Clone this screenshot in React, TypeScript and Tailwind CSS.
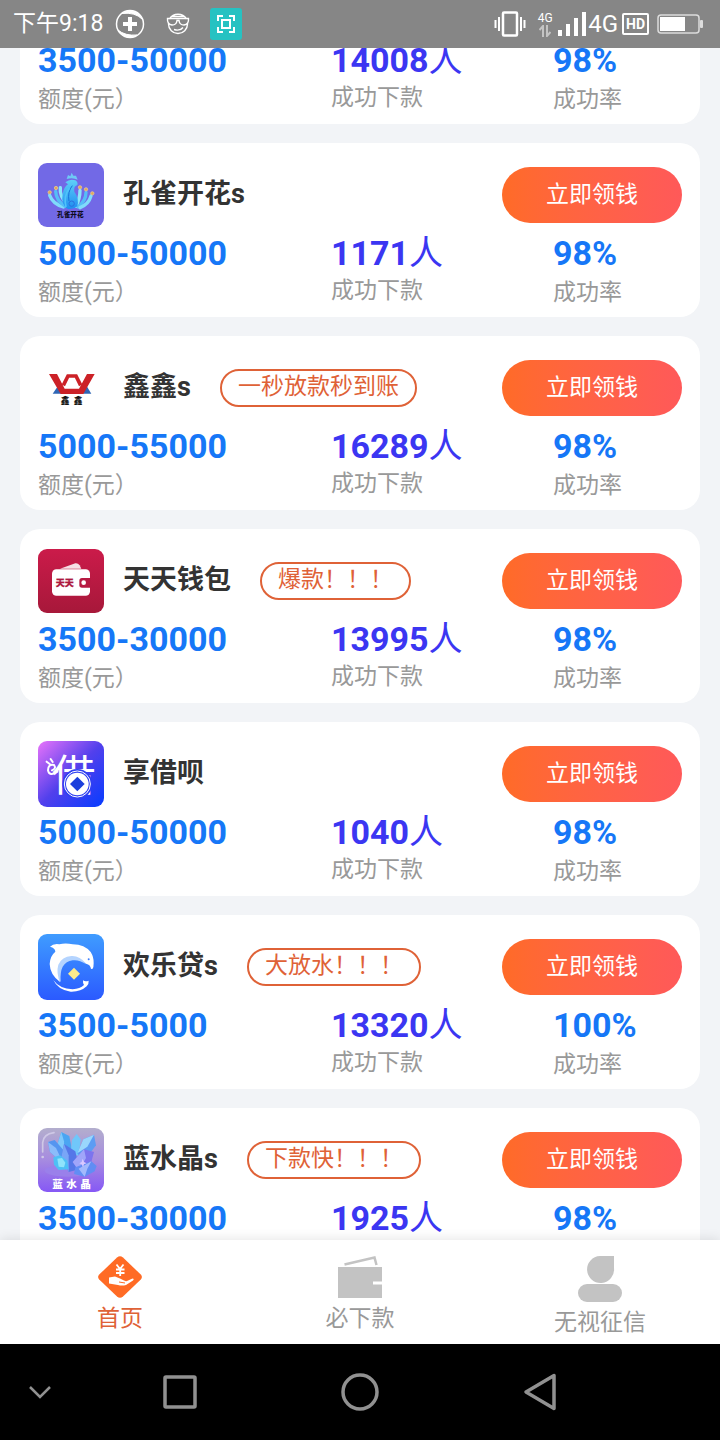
import React, { useState } from 'react';

const PeacockLogo = () => (
  <svg width="66" height="64" viewBox="0 0 198 192" aria-hidden="true">
    <defs>
      <linearGradient id="peacock" x1="0" y1="0" x2="0" y2="1">
        <stop offset="0" stopColor="#5fd0f8" />
        <stop offset="1" stopColor="#1f8df0" />
      </linearGradient>
    </defs>
    <rect width="198" height="192" rx="27" fill="#7269e6" />
    <g fill="none" strokeLinecap="round" strokeWidth="10">
      <path d="M35 97Q44 122 76 132" stroke="#7fdcfb" />
      <path d="M53 85Q54 112 82 130" stroke="#55bdf7" />
      <path d="M67 74Q64 100 88 124" stroke="#8be6fb" />
      <path d="M126 82Q126 108 114 130" stroke="#8be6fb" />
      <path d="M144 88Q144 114 120 132" stroke="#55bdf7" />
      <path d="M159 99Q152 124 126 134" stroke="#7fdcfb" />
    </g>
    <path d="M86 48L90 36L97 40L101 29L106 38L114 38L119 50Q104 42 86 48Z" fill="#6fc9f5" />
    <path d="M82 58Q96 46 112 52Q121 58 118 66Q106 70 109 86Q124 106 118 130Q108 140 90 138Q68 126 74 92Q78 72 90 64Z" fill="url(#peacock)" />
    <path d="M103 68Q88 86 93 114" fill="none" stroke="#1672d8" strokeWidth="3" />
    <path d="M84 132Q76 100 94 76" fill="none" stroke="#4fc3fa" strokeWidth="5" />
    <circle cx="101" cy="122" r="8" fill="none" stroke="#2c6fdf" strokeWidth="3" />
    <g fill="#e0a95c" stroke="#f3d08e" strokeWidth="2">
      <circle cx="35" cy="88" r="5" />
      <circle cx="54" cy="75" r="5" />
      <circle cx="126" cy="73" r="5" />
      <circle cx="144" cy="79" r="5" />
      <circle cx="163" cy="91" r="5" />
    </g>
    <text x="97" y="161" textAnchor="middle" fontSize="20" fontWeight="900" fill="#0d0b1f">孔雀开花</text>
  </svg>
);

const XinxinLogo = () => (
  <svg width="66" height="64" viewBox="0 0 198 192" aria-hidden="true">
    <path d="M44 113L60 90L74 113Z" fill="#2f66b5" />
    <path d="M132 113L146 90L160 113Z" fill="#2f66b5" />
    <path d="M33 54H57L80 98H123L147 54H170L136 114H68Z" fill="#cc2127" />
    <path d="M76 88L90 60H114L128 88" fill="none" stroke="#cc2127" strokeWidth="11" />
    <text x="68" y="145" fontSize="26" fontWeight="900" fill="#111">鑫</text>
    <text x="107" y="145" fontSize="26" fontWeight="900" fill="#111">鑫</text>
  </svg>
);

const WalletLogo = () => (
  <svg width="66" height="64" viewBox="0 0 198 192" aria-hidden="true">
    <defs>
      <linearGradient id="crimson" x1="0" y1="0" x2="0" y2="1">
        <stop offset="0" stopColor="#cb1b4a" />
        <stop offset="1" stopColor="#a7183a" />
      </linearGradient>
    </defs>
    <rect width="198" height="192" rx="27" fill="url(#crimson)" />
    <path d="M66 59L112 43Q120 42 125 49L130 59Z" fill="#f6dfe5" />
    <rect x="42" y="61" width="114" height="79" rx="13" fill="#fff" />
    <path d="M158 87H132Q124 87 124 95V108Q124 116 132 116H158Z" fill="#b71a42" />
    <circle cx="137" cy="101" r="7" fill="#fff" />
    <text x="80" y="112" textAnchor="middle" fontSize="27" fontWeight="900" fill="#ad183e" stroke="#ad183e">天天</text>
  </svg>
);

const JieLogo = () => (
  <svg width="66" height="66" viewBox="0 0 198 198" aria-hidden="true">
    <defs>
      <linearGradient id="violet" x1="0" y1="0" x2="1" y2="1">
        <stop offset="0" stopColor="#e873fa" />
        <stop offset="0.5" stopColor="#5240ec" />
        <stop offset="1" stopColor="#063cff" />
      </linearGradient>
    </defs>
    <rect width="198" height="198" rx="27" fill="url(#violet)" />
    <text x="42" y="150" fontSize="130" fill="#fff">借</text>
    <path d="M58 92Q34 108 30 88Q30 68 48 72Q56 82 42 88M38 54L44 63M26 62L35 69" fill="none" stroke="#fff" strokeWidth="6" strokeLinecap="round" />
    <circle cx="118" cy="129" r="45" fill="#2f40f2" />
    <circle cx="118" cy="129" r="39" fill="none" stroke="#fff" strokeWidth="3" />
    <circle cx="118" cy="129" r="34" fill="#fff" />
    <path d="M118 107L140 129L118 151L96 129Z" fill="#1b3fdc" />
  </svg>
);

const DolphinLogo = () => (
  <svg width="66" height="66" viewBox="0 0 198 198" aria-hidden="true">
    <defs>
      <linearGradient id="ocean" x1="0" y1="0" x2="0" y2="1">
        <stop offset="0" stopColor="#3f9cff" />
        <stop offset="1" stopColor="#2b5aff" />
      </linearGradient>
    </defs>
    <rect width="198" height="198" rx="27" fill="url(#ocean)" />
    <path d="M66 144Q50 116 58 92Q70 64 100 62Q126 62 144 90Q122 76 104 79Q84 82 74 98Q66 114 68 142Z" fill="#b4d4ff" />
    <path d="M36 38Q46 28 64 31Q82 26 104 31Q140 32 158 54Q168 70 167 88Q167 100 164 104L159 105Q158 92 144 89Q124 64 100 66Q72 68 61 92Q54 116 66 144Q36 122 35 90Q36 66 52 53Q52 42 36 38Z" fill="#fff" />
    <circle cx="152" cy="76" r="3" fill="#3f7fff" />
    <path d="M46 138Q64 164 104 166Q126 164 138 153Q134 146 135 139Q142 144 152 140Q153 150 146 157Q128 174 98 173Q60 168 46 138Z" fill="#fff" />
    <path d="M108 101L126 119L108 137L90 119Z" fill="#fdeb8c" />
  </svg>
);

const CrystalLogo = () => (
  <svg width="66" height="64" viewBox="0 0 198 192" aria-hidden="true">
    <defs>
      <linearGradient id="lilac" x1="0" y1="0" x2="0" y2="1">
        <stop offset="0" stopColor="#b3aecd" />
        <stop offset="0.5" stopColor="#a68be0" />
        <stop offset="1" stopColor="#8658f5" />
      </linearGradient>
    </defs>
    <rect width="198" height="192" rx="27" fill="url(#lilac)" />
    <path d="M14 72V44Q16 18 48 14" fill="none" stroke="#cfc8e6" strokeWidth="5" strokeLinecap="round" />
    <circle cx="14" cy="87" r="4" fill="#cfc8e6" />
    <ellipse cx="92" cy="128" rx="72" ry="18" fill="#9a80ea" />
    <path d="M70 12L94 24L102 66L80 92L58 50Z" fill="#4aa5f2" />
    <path d="M70 12L78 40L80 92L58 50Z" fill="#80c9fb" />
    <path d="M116 18L128 34L122 84L98 76L102 36Z" fill="#70c7fa" />
    <path d="M168 20L174 52L138 100L118 76L136 34Z" fill="#5d9cf3" />
    <path d="M168 20L148 56L118 76L136 34Z" fill="#9ad7fc" />
    <path d="M30 42L50 36L90 82L78 110L36 72Z" fill="#5595f0" />
    <path d="M30 42L54 60L78 110L36 72Z" fill="#8bbcfa" />
    <path d="M78 48L112 70L124 124L92 132L70 88Z" fill="#5577e8" />
    <path d="M78 48L92 82L92 132L70 88Z" fill="#79a6f7" />
    <path d="M138 64L168 72L160 102L122 128L104 102Z" fill="#7c74ee" />
    <path d="M138 64L144 90L122 128L104 102Z" fill="#a0a5fa" />
    <path d="M46 88L66 82L88 98L92 124L62 126L48 110Z" fill="#4ec0f5" />
    <path d="M58 92L72 90L82 104L78 118L62 116Z" fill="#8fe3fb" />
    <path d="M160 100L176 114L170 130L140 146L108 138L112 118Z" fill="#618df4" />
    <path d="M160 100L148 122L140 146L122 122Z" fill="#a3b9fc" />
    <path d="M134 92L138 102L146 106L138 109L135 118L131 109L124 106L131 102Z" fill="#d9c9ff" />
    <text x="43 85 127" y="180" fontSize="32" fontWeight="900" fill="#fff">蓝水晶</text>
  </svg>
);

const loans = [
  { name: '孔雀开花s', tag: '', logo: <PeacockLogo />, amount: '5000-50000', people: '1171', rate: '98%' },
  { name: '鑫鑫s', tag: '一秒放款秒到账', logo: <XinxinLogo />, amount: '5000-55000', people: '16289', rate: '98%' },
  { name: '天天钱包', tag: '爆款！！！', logo: <WalletLogo />, amount: '3500-30000', people: '13995', rate: '98%' },
  { name: '享借呗', tag: '', logo: <JieLogo />, amount: '5000-50000', people: '1040', rate: '98%' },
  { name: '欢乐贷s', tag: '大放水！！！', logo: <DolphinLogo />, amount: '3500-5000', people: '13320', rate: '100%' },
  { name: '蓝水晶s', tag: '下款快！！！', logo: <CrystalLogo />, amount: '3500-30000', people: '1925', rate: '98%' },
];

const tabs = [
  {
    label: '首页',
    icon: (
      <svg width="44" height="42" viewBox="0 0 44 42" aria-hidden="true">
        <path d="M19 1.4Q22-1 25 1.4L42.8 18.6Q45 21 42.8 23.4L25 40.6Q22 43 19 40.6L1.2 23.4Q-1 21 1.2 18.6Z" fill="#ff6b25" />
        <path d="M18.5 8.5L22 13L25.5 8.5M18 13.5H26.5M18 17H26.5M22.2 13V20" fill="none" stroke="#fff" strokeWidth="1.8" />
        <path d="M11 21.5L17 20.5L22 22.5L26 24.5Q28 25.5 29 25L34.5 22.5Q36.5 22.5 35 24.5L28 29Q24 30 20 29L11 27.5Z" fill="#fff" />
        <path d="M21 26L27 27" stroke="#ff6b25" strokeWidth="1" />
      </svg>
    ),
  },
  {
    label: '必下款',
    icon: (
      <svg width="44" height="42" viewBox="0 0 44 42" fill="#c3c3c3" aria-hidden="true">
        <path d="M6.5 8.5L36.5 1.5L38.5 9" fill="none" stroke="#c3c3c3" strokeWidth="2.5" />
        <path d="M0 11H44V25.5H35V28.5H44V42H0Z" />
      </svg>
    ),
  },
  {
    label: '无视征信',
    icon: (
      <svg width="44" height="46" viewBox="0 0 44 46" fill="#c3c3c3" aria-hidden="true">
        <path d="M22 0H36V12A13.5 13.5 0 1 1 22 0Z" />
        <rect y="28" width="44" height="18" rx="9" />
      </svg>
    ),
  },
];

const StatusBar = () => (
  <header className="relative flex h-12 shrink-0 items-center justify-between bg-[#868686] pl-[13px] pr-4 text-white">
    <div className="flex items-center">
      <span className="text-[23px] leading-8">下午9:18</span>
      <svg className="ml-3" width="30" height="30" viewBox="0 0 30 30" fill="none" stroke="#fff" aria-hidden="true">
        <circle cx="15" cy="15" r="13.5" strokeWidth="1.5" />
        <path d="M7 4.5A13 13 0 0 1 27 10Q20 3 7 4.5ZM3 21Q10 27 22 26A13 13 0 0 1 3 21Z" fill="#fff" />
        <path d="M15 8V22M8 15H22" strokeWidth="4" />
      </svg>
      <svg className="ml-[21px]" width="24" height="24" viewBox="0 0 24 24" fill="none" stroke="#fff" strokeWidth="1.4" aria-hidden="true">
        <path d="M3.5 7A10 10 0 0 1 20.5 7M2.5 12A9.500 9.500 0 0 0 21.5 12M6 4.5H18" />
        <path d="M1.5 6.5H22.5Q23 12.5 18 13Q13.5 13 13 8.5H11Q10.5 13 6 13Q1 12.5 1.5 6.5Z" />
        <path d="M8 17.5Q14 19.5 17 15.5" />
      </svg>
      <svg className="ml-5" width="32" height="32" viewBox="0 0 32 32" fill="none" stroke="#fff" strokeWidth="2" aria-hidden="true">
        <rect width="32" height="32" rx="3" fill="#26c2c2" stroke="none" />
        <path d="M8 13V8H13M19 8H24V13M24 19V24H19M13 24H8V19" />
        <rect x="12" y="12" width="8" height="8" />
      </svg>
    </div>
    <div className="flex items-center">
      <svg width="32" height="26" viewBox="0 0 32 26" fill="none" stroke="#fff" strokeWidth="2" aria-hidden="true">
        <rect x="9" y="1.5" width="14" height="23" rx="1" strokeWidth="2.5" />
        <path d="M1.5 9V17M5 6V20M27 6V20M30.5 9V17" />
      </svg>
      <div className="ml-[10px] flex w-[18px] flex-col items-center">
        <span className="text-xs leading-[14px]">4G</span>
        <svg width="12" height="12" viewBox="0 0 12 12" fill="none" stroke="#c4c4c4" strokeWidth="2" aria-hidden="true">
          <path d="M4 12V1L0.5 5M8 0V11L11.5 7" />
        </svg>
      </div>
      <svg className="ml-1" width="29" height="24" viewBox="0 0 29 24" fill="#fff" aria-hidden="true">
        <rect x="0" y="18" width="4" height="6" />
        <rect x="8" y="12" width="4" height="12" />
        <rect x="16" y="6" width="4" height="18" />
        <rect x="24" y="0" width="4" height="24" />
      </svg>
      <span className="ml-px text-2xl leading-8">4G</span>
      <span className="ml-1 flex h-[22px] w-[27px] items-center justify-center rounded-xs border-2 border-white text-sm font-bold leading-4">HD</span>
      <svg className="ml-2" width="47" height="20" viewBox="0 0 47 20" aria-hidden="true">
        <rect x="1" y="1" width="41" height="18" rx="3" fill="none" stroke="#dcdcdc" strokeWidth="1.5" />
        <rect x="3" y="3" width="25" height="14" fill="#fff" />
        <rect x="43" y="6" width="3" height="8" rx="1" fill="#dcdcdc" />
      </svg>
    </div>
  </header>
);

interface StatsProps {
  amount: string;
  people: string;
  rate: string;
}

const Stats = ({ amount, people, rate }: StatsProps) => (
  <div className="grid grid-cols-[293fr_222fr_129fr]">
    <div>
      <div className="text-[34px] font-bold leading-11 text-[#1677f7]">{amount}</div>
      <div className="text-[23px] leading-9 text-[#999]">额度(元）</div>
    </div>
    <div>
      <div className="text-[34px] font-bold leading-11 text-[#3b36f2]">
        {people}
        <span className="font-normal">人</span>
      </div>
      <div className="text-[23px] leading-8 text-[#999]">成功下款</div>
    </div>
    <div>
      <div className="text-[34px] font-bold leading-11 text-[#1677f7]">{rate}</div>
      <div className="text-[23px] leading-9 text-[#999]">成功率</div>
    </div>
  </div>
);

const App = () => {
  const [active, setActive] = useState('首页');

  return (
    <div className="flex h-screen flex-col bg-[#f2f4f7] font-['Roboto','Noto_Sans_CJK_SC',sans-serif]">
      <StatusBar />

      <main className="min-h-0 flex-1 overflow-hidden">
        {/* the first card is half scrolled under the status bar */}
        <div className="-mt-2.5 flex flex-col gap-[19px] px-5">
          <section className="rounded-b-[20px] bg-white px-[18px] pb-1.5">
            <Stats amount="3500-50000" people="14008" rate="98%" />
          </section>
          {loans.map((loan) => (
            <section key={loan.name} className="rounded-[20px] bg-white px-[18px] pb-1.5 pt-5">
              <div className="mb-1 flex h-16 items-center">
                {loan.logo}
                <h2 className="ml-[19px] pb-0.5 text-[27px] font-bold leading-9 text-[#333]">{loan.name}</h2>
                {loan.tag && (
                  <span className="ml-[29px] h-[38px] rounded-full border-2 border-[#df6237] px-4 text-[23px] leading-8 text-[#df6237]">
                    {loan.tag}
                  </span>
                )}
                <button className="ml-auto h-14 w-[180px] rounded-full bg-linear-to-r from-[#ff6b27] to-[#ff5959] text-[23px] text-white">
                  立即领钱
                </button>
              </div>
              <Stats amount={loan.amount} people={loan.people} rate={loan.rate} />
            </section>
          ))}
        </div>
      </main>

      <nav className="relative grid h-26 shrink-0 grid-cols-3 bg-white pt-4 shadow-[0_0_12px_rgba(0,0,0,0.12)]">
        {tabs.map((tab) => (
          <button key={tab.label} onClick={() => setActive(tab.label)} className="flex flex-col items-center">
            {tab.icon}
            <span className={active === tab.label ? 'text-[23px] leading-[42px] text-[#df6237]' : 'text-[23px] leading-[42px] text-[#999]'}>
              {tab.label}
            </span>
          </button>
        ))}
      </nav>

      <footer className="flex h-24 shrink-0 items-center bg-black">
        <button aria-label="收起" className="flex w-20 justify-center">
          <svg width="24" height="14" viewBox="0 0 24 14" fill="none" stroke="#919191" strokeWidth="2.5" aria-hidden="true">
            <path d="M2 2L12 12L22 2" />
          </svg>
        </button>
        <div className="ml-[10px] mr-[90px] grid flex-1 grid-cols-3">
          <button aria-label="最近任务" className="flex items-center justify-center">
            <svg width="34" height="34" viewBox="0 0 34 34" fill="none" stroke="#919191" strokeWidth="3.5" aria-hidden="true">
              <rect x="2" y="2" width="30" height="30" rx="1" />
            </svg>
          </button>
          <button aria-label="主屏幕" className="flex items-center justify-center">
            <svg width="38" height="38" viewBox="0 0 38 38" fill="none" stroke="#919191" strokeWidth="3.5" aria-hidden="true">
              <circle cx="19" cy="19" r="17" />
            </svg>
          </button>
          <button aria-label="返回" className="flex items-center justify-center">
            <svg width="34" height="38" viewBox="0 0 34 38" fill="none" stroke="#919191" strokeWidth="3.5" strokeLinejoin="round" aria-hidden="true">
              <path d="M31 2.5V35.5L3 19Z" />
            </svg>
          </button>
        </div>
      </footer>
    </div>
  );
};

export default App;
